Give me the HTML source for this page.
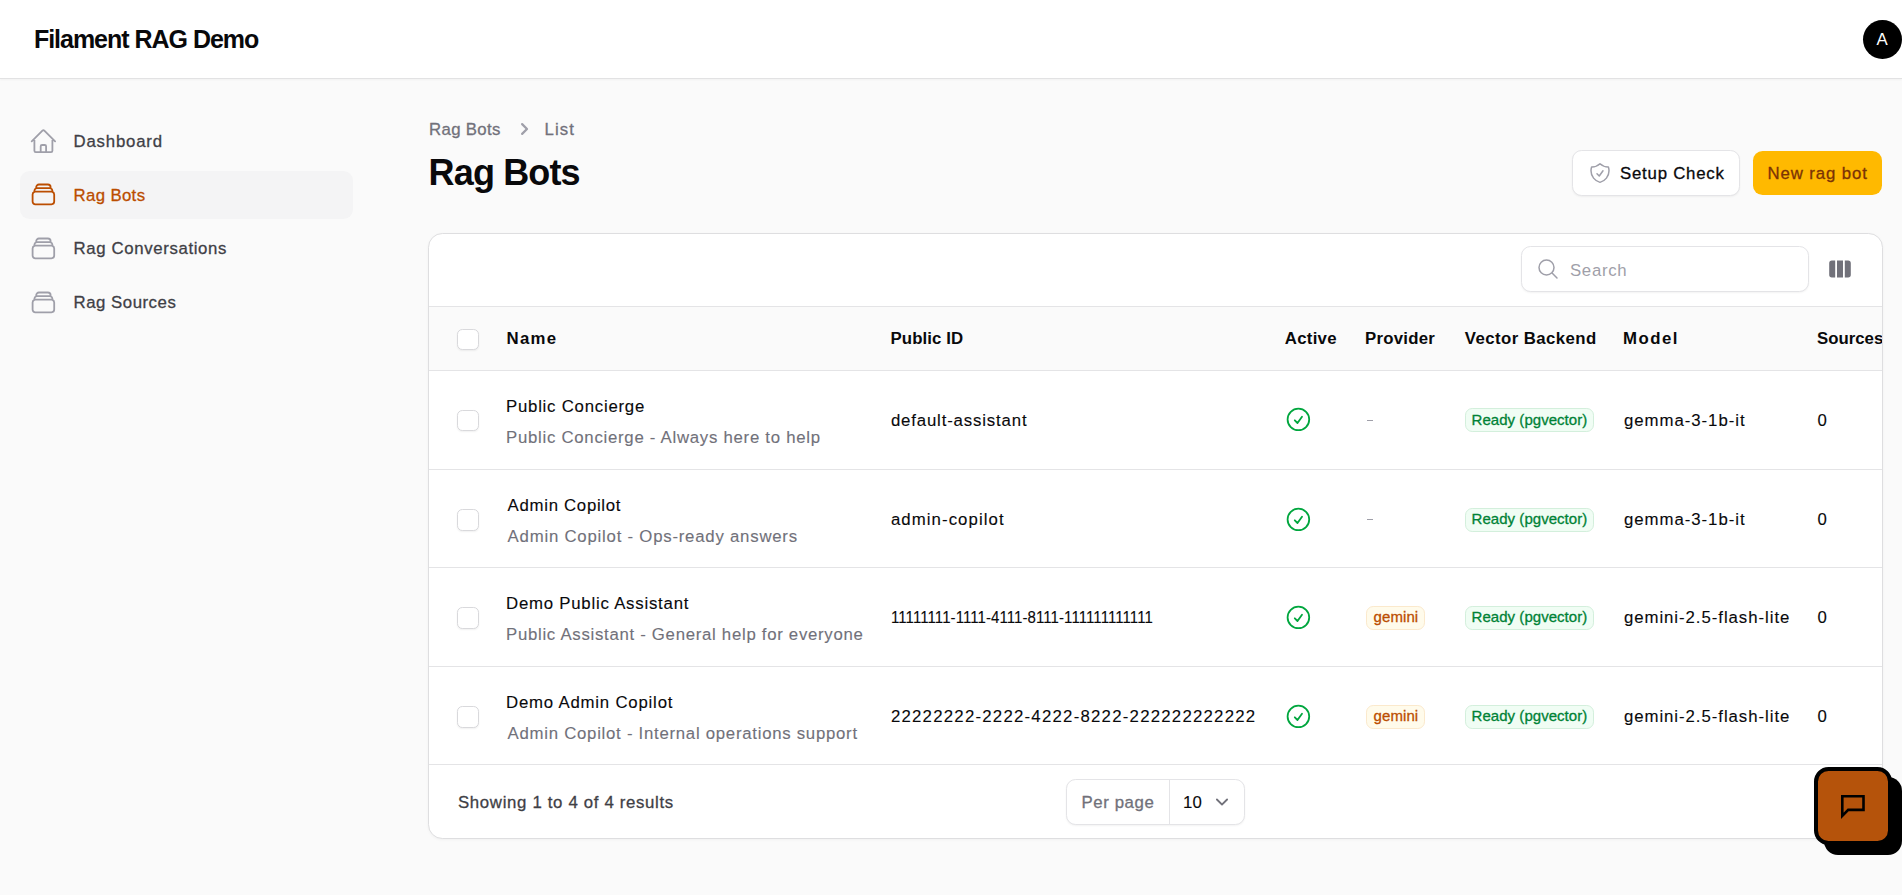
<!DOCTYPE html>
<html><head><meta charset="utf-8"><style>
html,body{margin:0;padding:0;width:1902px;height:895px;overflow:hidden;background:#fafafa;font-family:"Liberation Sans",sans-serif}
.t{position:absolute;line-height:1;white-space:nowrap}
</style></head><body>
<div style="position:absolute;left:0;top:0;width:1902px;height:77.7px;background:#fff;border-bottom:1.2px solid #e2e2e3;box-shadow:0 1px 2px rgba(0,0,0,.04)"></div>
<div id="t0" class="t" style="left:33.90px;top:27.00px;font-size:25.00px;color:#09090b;font-weight:700;letter-spacing:-1.019px;">Filament RAG Demo</div>
<div style="position:absolute;left:1863.1px;top:19.9px;width:38.8px;height:38.8px;border-radius:50%;background:#000"></div>
<div id="t1" class="t" style="left:1876.50px;top:32.00px;font-size:16.80px;color:#fff;letter-spacing:0.000px;">A</div>
<div style="position:absolute;left:20.1px;top:170.9px;width:333.1px;height:47.9px;border-radius:9.6px;background:#f4f4f5"></div>
<svg style="position:absolute;left:29.20px;top:126.50px" width="28.8" height="28.8" viewBox="0 0 24 24" fill="none" stroke="#9f9fa9" stroke-width="1.5"><path stroke-linecap="round" stroke-linejoin="round" d="m2.25 12 8.954-8.955c.44-.439 1.152-.439 1.591 0L21.75 12M4.5 9.75v10.125c0 .621.504 1.125 1.125 1.125H9.75v-4.875c0-.621.504-1.125 1.125-1.125h2.25c.621 0 1.125.504 1.125 1.125V21h4.125c.621 0 1.125-.504 1.125-1.125V9.75M8.25 21h8.25"/></svg>
<div id="t2" class="t" style="left:73.50px;top:134.00px;font-size:16.80px;color:#3f3f46;letter-spacing:0.814px;-webkit-text-stroke:0.3px currentColor;">Dashboard</div>
<svg style="position:absolute;left:29.20px;top:180.10px" width="28.8" height="28.8" viewBox="0 0 24 24" fill="none" stroke="#bb4d00" stroke-width="1.5"><path stroke-linecap="round" stroke-linejoin="round" d="M6 6.878V6a2.25 2.25 0 0 1 2.25-2.25h7.5A2.25 2.25 0 0 1 18 6v.878m-12 0c.235-.083.487-.128.75-.128h10.5c.263 0 .515.045.75.128m-12 0A2.25 2.25 0 0 0 4.5 9v.878m13.5-3A2.25 2.25 0 0 1 19.5 9v.878m0 0a2.246 2.246 0 0 0-.75-.128H5.25c-.263 0-.515.045-.75.128m15 0A2.25 2.25 0 0 1 21 12v6a2.25 2.25 0 0 1-2.25 2.25H5.25A2.25 2.25 0 0 1 3 18v-6c0-.98.626-1.813 1.5-2.122"/></svg>
<div id="t3" class="t" style="left:73.50px;top:188.00px;font-size:16.80px;color:#bb4d00;letter-spacing:0.357px;-webkit-text-stroke:0.3px currentColor;">Rag Bots</div>
<svg style="position:absolute;left:29.20px;top:233.90px" width="28.8" height="28.8" viewBox="0 0 24 24" fill="none" stroke="#9f9fa9" stroke-width="1.5"><path stroke-linecap="round" stroke-linejoin="round" d="M6 6.878V6a2.25 2.25 0 0 1 2.25-2.25h7.5A2.25 2.25 0 0 1 18 6v.878m-12 0c.235-.083.487-.128.75-.128h10.5c.263 0 .515.045.75.128m-12 0A2.25 2.25 0 0 0 4.5 9v.878m13.5-3A2.25 2.25 0 0 1 19.5 9v.878m0 0a2.246 2.246 0 0 0-.75-.128H5.25c-.263 0-.515.045-.75.128m15 0A2.25 2.25 0 0 1 21 12v6a2.25 2.25 0 0 1-2.25 2.25H5.25A2.25 2.25 0 0 1 3 18v-6c0-.98.626-1.813 1.5-2.122"/></svg>
<div id="t4" class="t" style="left:73.50px;top:241.00px;font-size:16.80px;color:#3f3f46;letter-spacing:0.640px;-webkit-text-stroke:0.3px currentColor;">Rag Conversations</div>
<svg style="position:absolute;left:29.20px;top:288.10px" width="28.8" height="28.8" viewBox="0 0 24 24" fill="none" stroke="#9f9fa9" stroke-width="1.5"><path stroke-linecap="round" stroke-linejoin="round" d="M6 6.878V6a2.25 2.25 0 0 1 2.25-2.25h7.5A2.25 2.25 0 0 1 18 6v.878m-12 0c.235-.083.487-.128.75-.128h10.5c.263 0 .515.045.75.128m-12 0A2.25 2.25 0 0 0 4.5 9v.878m13.5-3A2.25 2.25 0 0 1 19.5 9v.878m0 0a2.246 2.246 0 0 0-.75-.128H5.25c-.263 0-.515.045-.75.128m15 0A2.25 2.25 0 0 1 21 12v6a2.25 2.25 0 0 1-2.25 2.25H5.25A2.25 2.25 0 0 1 3 18v-6c0-.98.626-1.813 1.5-2.122"/></svg>
<div id="t5" class="t" style="left:73.50px;top:295.00px;font-size:16.80px;color:#3f3f46;letter-spacing:0.528px;-webkit-text-stroke:0.3px currentColor;">Rag Sources</div>
<div id="t6" class="t" style="left:429.00px;top:122.00px;font-size:16.80px;color:#71717a;letter-spacing:0.343px;-webkit-text-stroke:0.3px currentColor;">Rag Bots</div>
<svg style="position:absolute;left:511.9px;top:117.1px" width="24" height="24" viewBox="0 0 16 16" fill="#9f9fa9"><path fill-rule="evenodd" d="M6.22 4.22a.75.75 0 0 1 1.06 0l3.25 3.25a.75.75 0 0 1 0 1.06l-3.25 3.25a.75.75 0 0 1-1.06-1.06L8.94 8 6.22 5.28a.75.75 0 0 1 0-1.06Z" clip-rule="evenodd"/></svg>
<div id="t7" class="t" style="left:544.40px;top:122.00px;font-size:16.80px;color:#71717a;letter-spacing:1.153px;-webkit-text-stroke:0.3px currentColor;">List</div>
<div id="t8" class="t" style="left:428.60px;top:155.00px;font-size:36.00px;color:#09090b;font-weight:700;letter-spacing:-0.858px;">Rag Bots</div>
<div style="position:absolute;left:1572.4px;top:150.2px;width:167.2px;height:45.5px;box-sizing:border-box;border:1.2px solid #e4e4e7;border-radius:9.6px;background:#fff;box-shadow:0 1px 2px rgba(0,0,0,.05)"></div>
<svg style="position:absolute;left:1588.00px;top:161.00px" width="24" height="24" viewBox="0 0 24 24" fill="none" stroke="#9f9fa9" stroke-width="1.5"><path stroke-linecap="round" stroke-linejoin="round" d="M9 12.75 11.25 15 15 9.75m-3-7.036A11.959 11.959 0 0 1 3.598 6 11.99 11.99 0 0 0 3 9.749c0 5.592 3.824 10.29 9 11.623 5.176-1.332 9-6.03 9-11.622 0-1.31-.21-2.571-.598-3.751h-.152c-3.196 0-6.1-1.248-8.25-3.285Z"/></svg>
<div id="t9" class="t" style="left:1620.00px;top:166.00px;font-size:16.80px;color:#09090b;letter-spacing:0.777px;-webkit-text-stroke:0.3px currentColor;">Setup Check</div>
<div style="position:absolute;left:1752.9px;top:150.9px;width:129.1px;height:44px;border-radius:9.6px;background:#ffb900"></div>
<div id="t10" class="t" style="left:1767.40px;top:166.00px;font-size:16.80px;color:#7b3306;letter-spacing:0.901px;-webkit-text-stroke:0.3px currentColor;">New rag bot</div>
<div style="position:absolute;left:428.0px;top:233.0px;width:1455.1px;height:606.1px;box-sizing:border-box;border:1.2px solid #dedee0;border-radius:14.4px;background:#fff;box-shadow:0 1px 3px rgba(0,0,0,.04);overflow:hidden">
<div style="position:absolute;left:-429.20px;top:-234.20px;width:1902px;height:895px">
<div style="position:absolute;left:0;top:305.7px;width:1902px;height:65.3px;background:#fafafa;border-top:1.2px solid #e4e4e6;border-bottom:1.2px solid #e4e4e6;box-sizing:border-box"></div>
<div style="position:absolute;left:0;top:469.1px;width:1902px;height:1.2px;background:#e4e4e6"></div>
<div style="position:absolute;left:0;top:566.9px;width:1902px;height:1.2px;background:#e4e4e6"></div>
<div style="position:absolute;left:0;top:665.9px;width:1902px;height:1.2px;background:#e4e4e6"></div>
<div style="position:absolute;left:0;top:763.7px;width:1902px;height:1.2px;background:#e4e4e6"></div>
<div style="position:absolute;left:1521.1px;top:245.9px;width:288.4px;height:46.2px;box-sizing:border-box;border:1.2px solid #e4e4e7;border-radius:9.6px;background:#fff;box-shadow:0 1px 2px rgba(0,0,0,.05)"></div>
<svg style="position:absolute;left:1536.00px;top:257.00px" width="24" height="24" viewBox="0 0 24 24" fill="none" stroke="#9f9fa9" stroke-width="1.5"><path stroke-linecap="round" stroke-linejoin="round" d="m21 21-5.197-5.197m0 0A7.5 7.5 0 1 0 5.196 5.196a7.5 7.5 0 0 0 10.607 10.607Z"/></svg>
<div id="t11" class="t" style="left:1570.20px;top:263.00px;font-size:16.80px;color:#9f9fa9;letter-spacing:0.676px;">Search</div>
<svg style="position:absolute;left:1828px;top:257px" width="24" height="24" viewBox="0 0 20 20" fill="#71717a"><path d="M14 17h2.75A2.25 2.25 0 0 0 19 14.75v-9.5A2.25 2.25 0 0 0 16.75 3H14v14ZM12.5 3h-5v14h5V3ZM3.25 3H6v14H3.25A2.25 2.25 0 0 1 1 14.75v-9.5A2.25 2.25 0 0 1 3.25 3Z"/></svg>
<div style="position:absolute;left:457.2px;top:329.0px;width:21.6px;height:21.6px;box-sizing:border-box;border:1.3px solid #d9d9dc;border-radius:5.4px;background:#fff;box-shadow:0 1px 2px rgba(0,0,0,.06)"></div>
<div id="t12" class="t" style="left:506.70px;top:331.00px;font-size:16.80px;color:#09090b;font-weight:700;letter-spacing:1.279px;">Name</div>
<div id="t13" class="t" style="left:890.70px;top:331.00px;font-size:16.80px;color:#09090b;font-weight:700;letter-spacing:0.091px;">Public ID</div>
<div id="t14" class="t" style="left:1285.00px;top:331.00px;font-size:16.80px;color:#09090b;font-weight:700;letter-spacing:0.277px;">Active</div>
<div id="t15" class="t" style="left:1365.20px;top:331.00px;font-size:16.80px;color:#09090b;font-weight:700;letter-spacing:0.235px;">Provider</div>
<div id="t16" class="t" style="left:1465.00px;top:331.00px;font-size:16.80px;color:#09090b;font-weight:700;letter-spacing:0.427px;">Vector Backend</div>
<div id="t17" class="t" style="left:1623.20px;top:331.00px;font-size:16.80px;color:#09090b;font-weight:700;letter-spacing:1.466px;">Model</div>
<div id="t18" class="t" style="left:1817.20px;top:331.00px;font-size:16.80px;color:#09090b;font-weight:700;letter-spacing:0.000px;">Sources</div>
<div style="position:absolute;left:457.2px;top:410.0px;width:21.6px;height:21.6px;box-sizing:border-box;border:1.3px solid #d9d9dc;border-radius:5.4px;background:#fff;box-shadow:0 1px 2px rgba(0,0,0,.06)"></div>
<div id="t19" class="t" style="left:506.20px;top:399.00px;font-size:16.80px;color:#09090b;letter-spacing:0.759px;-webkit-text-stroke:0.12px currentColor;">Public Concierge</div>
<div id="t20" class="t" style="left:506.20px;top:430.00px;font-size:16.80px;color:#71717a;letter-spacing:0.724px;-webkit-text-stroke:0.12px currentColor;">Public Concierge - Always here to help</div>
<div id="t21" class="t" style="left:891.10px;top:413.00px;font-size:16.80px;color:#09090b;letter-spacing:0.841px;-webkit-text-stroke:0.12px currentColor;">default-assistant</div>
<svg style="position:absolute;left:1284.30px;top:405.60px" width="28.8" height="28.8" viewBox="0 0 24 24" fill="none" stroke="#00a63e" stroke-width="1.5"><path stroke-linecap="round" stroke-linejoin="round" d="M9 12.75 11.25 15 15 9.75M21 12a9 9 0 1 1-18 0 9 9 0 0 1 18 0Z"/></svg>
<div style="position:absolute;left:1367px;top:419.9px;width:6px;height:1.3px;background:#9f9fa9"></div>
<div style="position:absolute;left:1465.2px;top:408.5px;width:129.4px;height:24.1px;box-sizing:border-box;border:1.2px solid #d3efdc;border-radius:7.2px;background:#f0fdf4"></div>
<div id="t22" class="t" style="left:1471.80px;top:412.00px;font-size:15.00px;color:#008236;letter-spacing:0.037px;-webkit-text-stroke:0.3px currentColor;">Ready (pgvector)</div>
<div id="t23" class="t" style="left:1624.10px;top:413.00px;font-size:16.80px;color:#09090b;letter-spacing:0.964px;-webkit-text-stroke:0.12px currentColor;">gemma-3-1b-it</div>
<div id="t24" class="t" style="left:1817.70px;top:413.00px;font-size:16.80px;color:#09090b;letter-spacing:0.000px;-webkit-text-stroke:0.12px currentColor;">0</div>
<div style="position:absolute;left:457.2px;top:509.4px;width:21.6px;height:21.6px;box-sizing:border-box;border:1.3px solid #d9d9dc;border-radius:5.4px;background:#fff;box-shadow:0 1px 2px rgba(0,0,0,.06)"></div>
<div id="t25" class="t" style="left:507.80px;top:498.00px;font-size:16.80px;color:#09090b;letter-spacing:0.702px;-webkit-text-stroke:0.12px currentColor;">Admin Copilot</div>
<div id="t26" class="t" style="left:507.80px;top:529.00px;font-size:16.80px;color:#71717a;letter-spacing:0.770px;-webkit-text-stroke:0.12px currentColor;">Admin Copilot - Ops-ready answers</div>
<div id="t27" class="t" style="left:891.10px;top:512.00px;font-size:16.80px;color:#09090b;letter-spacing:1.074px;-webkit-text-stroke:0.12px currentColor;">admin-copilot</div>
<svg style="position:absolute;left:1284.30px;top:505.00px" width="28.8" height="28.8" viewBox="0 0 24 24" fill="none" stroke="#00a63e" stroke-width="1.5"><path stroke-linecap="round" stroke-linejoin="round" d="M9 12.75 11.25 15 15 9.75M21 12a9 9 0 1 1-18 0 9 9 0 0 1 18 0Z"/></svg>
<div style="position:absolute;left:1367px;top:519.3px;width:6px;height:1.3px;background:#9f9fa9"></div>
<div style="position:absolute;left:1465.2px;top:507.9px;width:129.4px;height:24.1px;box-sizing:border-box;border:1.2px solid #d3efdc;border-radius:7.2px;background:#f0fdf4"></div>
<div id="t28" class="t" style="left:1471.80px;top:511.00px;font-size:15.00px;color:#008236;letter-spacing:0.037px;-webkit-text-stroke:0.3px currentColor;">Ready (pgvector)</div>
<div id="t29" class="t" style="left:1624.10px;top:512.00px;font-size:16.80px;color:#09090b;letter-spacing:0.964px;-webkit-text-stroke:0.12px currentColor;">gemma-3-1b-it</div>
<div id="t30" class="t" style="left:1817.70px;top:512.00px;font-size:16.80px;color:#09090b;letter-spacing:0.000px;-webkit-text-stroke:0.12px currentColor;">0</div>
<div style="position:absolute;left:457.2px;top:607.2px;width:21.6px;height:21.6px;box-sizing:border-box;border:1.3px solid #d9d9dc;border-radius:5.4px;background:#fff;box-shadow:0 1px 2px rgba(0,0,0,.06)"></div>
<div id="t31" class="t" style="left:506.20px;top:596.00px;font-size:16.80px;color:#09090b;letter-spacing:0.773px;-webkit-text-stroke:0.12px currentColor;">Demo Public Assistant</div>
<div id="t32" class="t" style="left:506.20px;top:627.00px;font-size:16.80px;color:#71717a;letter-spacing:0.706px;-webkit-text-stroke:0.12px currentColor;">Public Assistant - General help for everyone</div>
<div id="t33" class="t" style="left:890.70px;top:610.00px;font-size:16.80px;color:#09090b;letter-spacing:0.069px;-webkit-text-stroke:0.12px currentColor;transform:scaleX(0.8959);transform-origin:0.00px 0;">11111111-1111-4111-8111-111111111111</div>
<svg style="position:absolute;left:1284.30px;top:602.80px" width="28.8" height="28.8" viewBox="0 0 24 24" fill="none" stroke="#00a63e" stroke-width="1.5"><path stroke-linecap="round" stroke-linejoin="round" d="M9 12.75 11.25 15 15 9.75M21 12a9 9 0 1 1-18 0 9 9 0 0 1 18 0Z"/></svg>
<div style="position:absolute;left:1366.2px;top:605.7px;width:58.5px;height:24.1px;box-sizing:border-box;border:1.2px solid #fbe9cc;border-radius:7.2px;background:#fffbeb"></div>
<div id="t34" class="t" style="left:1373.80px;top:609.00px;font-size:15.00px;color:#bb4d00;letter-spacing:0.082px;-webkit-text-stroke:0.3px currentColor;">gemini</div>
<div style="position:absolute;left:1465.2px;top:605.7px;width:129.4px;height:24.1px;box-sizing:border-box;border:1.2px solid #d3efdc;border-radius:7.2px;background:#f0fdf4"></div>
<div id="t35" class="t" style="left:1471.80px;top:609.00px;font-size:15.00px;color:#008236;letter-spacing:0.037px;-webkit-text-stroke:0.3px currentColor;">Ready (pgvector)</div>
<div id="t36" class="t" style="left:1624.10px;top:610.00px;font-size:16.80px;color:#09090b;letter-spacing:0.950px;-webkit-text-stroke:0.12px currentColor;">gemini-2.5-flash-lite</div>
<div id="t37" class="t" style="left:1817.70px;top:610.00px;font-size:16.80px;color:#09090b;letter-spacing:0.000px;-webkit-text-stroke:0.12px currentColor;">0</div>
<div style="position:absolute;left:457.2px;top:706.2px;width:21.6px;height:21.6px;box-sizing:border-box;border:1.3px solid #d9d9dc;border-radius:5.4px;background:#fff;box-shadow:0 1px 2px rgba(0,0,0,.06)"></div>
<div id="t38" class="t" style="left:506.20px;top:695.00px;font-size:16.80px;color:#09090b;letter-spacing:0.792px;-webkit-text-stroke:0.12px currentColor;">Demo Admin Copilot</div>
<div id="t39" class="t" style="left:507.80px;top:726.00px;font-size:16.80px;color:#71717a;letter-spacing:0.725px;-webkit-text-stroke:0.12px currentColor;">Admin Copilot - Internal operations support</div>
<div id="t40" class="t" style="left:891.10px;top:709.00px;font-size:16.80px;color:#09090b;letter-spacing:1.235px;-webkit-text-stroke:0.12px currentColor;">22222222-2222-4222-8222-222222222222</div>
<svg style="position:absolute;left:1284.30px;top:701.80px" width="28.8" height="28.8" viewBox="0 0 24 24" fill="none" stroke="#00a63e" stroke-width="1.5"><path stroke-linecap="round" stroke-linejoin="round" d="M9 12.75 11.25 15 15 9.75M21 12a9 9 0 1 1-18 0 9 9 0 0 1 18 0Z"/></svg>
<div style="position:absolute;left:1366.2px;top:704.7px;width:58.5px;height:24.1px;box-sizing:border-box;border:1.2px solid #fbe9cc;border-radius:7.2px;background:#fffbeb"></div>
<div id="t41" class="t" style="left:1373.80px;top:708.00px;font-size:15.00px;color:#bb4d00;letter-spacing:0.082px;-webkit-text-stroke:0.3px currentColor;">gemini</div>
<div style="position:absolute;left:1465.2px;top:704.7px;width:129.4px;height:24.1px;box-sizing:border-box;border:1.2px solid #d3efdc;border-radius:7.2px;background:#f0fdf4"></div>
<div id="t42" class="t" style="left:1471.80px;top:708.00px;font-size:15.00px;color:#008236;letter-spacing:0.037px;-webkit-text-stroke:0.3px currentColor;">Ready (pgvector)</div>
<div id="t43" class="t" style="left:1624.10px;top:709.00px;font-size:16.80px;color:#09090b;letter-spacing:0.950px;-webkit-text-stroke:0.12px currentColor;">gemini-2.5-flash-lite</div>
<div id="t44" class="t" style="left:1817.70px;top:709.00px;font-size:16.80px;color:#09090b;letter-spacing:0.000px;-webkit-text-stroke:0.12px currentColor;">0</div>
<div id="t45" class="t" style="left:458.20px;top:795.00px;font-size:16.80px;color:#3f3f46;letter-spacing:0.670px;-webkit-text-stroke:0.3px currentColor;">Showing 1 to 4 of 4 results</div>
<div style="position:absolute;left:1066.4px;top:779.3px;width:178.4px;height:46px;box-sizing:border-box;border:1.2px solid #e4e4e7;border-radius:9.6px;background:#fff;box-shadow:0 1px 2px rgba(0,0,0,.05)"></div>
<div style="position:absolute;left:1169px;top:780.5px;width:1.2px;height:43.6px;background:#e4e4e7"></div>
<div id="t46" class="t" style="left:1081.70px;top:795.00px;font-size:16.80px;color:#71717a;letter-spacing:0.601px;-webkit-text-stroke:0.3px currentColor;">Per page</div>
<div id="t47" class="t" style="left:1183.30px;top:795.00px;font-size:16.80px;color:#09090b;letter-spacing:0.018px;-webkit-text-stroke:0.12px currentColor;">10</div>
<svg style="position:absolute;left:1209.9px;top:788.8px" width="24" height="24" viewBox="0 0 20 20" fill="#71717a"><path fill-rule="evenodd" d="M5.22 8.22a.75.75 0 0 1 1.06 0L10 11.94l3.72-3.72a.75.75 0 1 1 1.06 1.06l-4.25 4.25a.75.75 0 0 1-1.06 0L5.22 9.28a.75.75 0 0 1 0-1.06Z" clip-rule="evenodd"/></svg>
</div></div>
<div style="position:absolute;left:1824px;top:777px;width:78px;height:77.8px;border-radius:14px;background:#000"></div>
<div style="position:absolute;left:1814.1px;top:766.9px;width:77.5px;height:77.8px;box-sizing:border-box;border:4.3px solid #000;border-radius:14.5px;background:#b5530b"></div>
<svg style="position:absolute;left:1838px;top:792px" width="30" height="30" viewBox="0 0 30 30" fill="none" stroke="#000" stroke-width="2.6"><path stroke-linejoin="miter" d="M4.3 4.3H25.5V17.9H10.2L4.3 23.9Z"/></svg>
</body></html>
